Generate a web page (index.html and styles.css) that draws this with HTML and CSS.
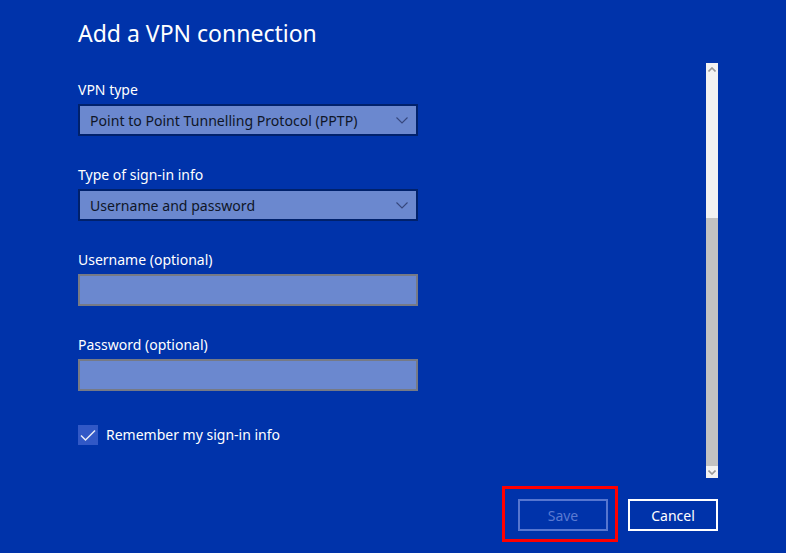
FILE: index.html
```html
<!DOCTYPE html>
<html>
<head>
<meta charset="utf-8">
<link rel="stylesheet" href="styles.css">
</head>
<body>
<div class="dialog">
  <h1 class="title">Add a VPN connection</h1>
  <div class="content">
    <div class="form">
      <div class="field">
        <div class="label">VPN type</div>
        <div class="select"><span>Point to Point Tunnelling Protocol (PPTP)</span>
          <svg class="chev" width="12" height="7" viewBox="0 0 12 7"><path d="M0.5 0.5 L6 6 L11.5 0.5" fill="none" stroke="#36477c" stroke-width="1.1"/></svg>
        </div>
      </div>
      <div class="field">
        <div class="label">Type of sign-in info</div>
        <div class="select"><span>Username and password</span>
          <svg class="chev" width="12" height="7" viewBox="0 0 12 7"><path d="M0.5 0.5 L6 6 L11.5 0.5" fill="none" stroke="#36477c" stroke-width="1.1"/></svg>
        </div>
      </div>
      <div class="field">
        <div class="label">Username (optional)</div>
        <div class="textbox"></div>
      </div>
      <div class="field">
        <div class="label">Password (optional)</div>
        <div class="textbox"></div>
      </div>
      <div class="check-row">
        <span class="checkbox"><svg width="20" height="20" viewBox="0 0 20 20"><path d="M3 10.5 L7.5 15 L17 5.5" fill="none" stroke="#e8ecf8" stroke-width="1.5"/></svg></span>
        <span class="check-label">Remember my sign-in info</span>
      </div>
    </div>
    <div class="scrollbar">
      <div class="sb-btn"><svg width="8" height="5" viewBox="0 0 8 5"><path d="M0.5 4.5 L4 1 L7.5 4.5" fill="none" stroke="#9a9a9a" stroke-width="1.6"/></svg></div>
      <div class="sb-track"></div>
      <div class="sb-thumb"></div>
      <div class="sb-btn"><svg width="8" height="5" viewBox="0 0 8 5"><path d="M0.5 0.5 L4 4 L7.5 0.5" fill="none" stroke="#9a9a9a" stroke-width="1.6"/></svg></div>
    </div>
  </div>
  <div class="actions">
    <div class="highlight"><button class="btn btn-disabled">Save</button></div>
    <button class="btn btn-cancel">Cancel</button>
  </div>
</div>
</body>
</html>
```
FILE: styles.css
```css
html, body {
  margin: 0;
  padding: 0;
  background: #0033aa;
  width: 786px;
  height: 553px;
  overflow: hidden;
  font-family: "Noto Sans", "Open Sans", sans-serif;
}
.dialog {
  padding: 0 68px 0 78px;
}
.title {
  margin: 18px 0 0 0;
  height: 30px;
  line-height: 30px;
  font-size: 23px;
  font-weight: 400;
  color: #ffffff;
}
.content {
  margin-top: 15px;
  display: flex;
  justify-content: space-between;
  align-items: flex-start;
}
.form {
  width: 340px;
  padding-top: 17px;
  display: flex;
  flex-direction: column;
  gap: 29px;
}
.field {
  display: flex;
  flex-direction: column;
  gap: 4px;
}
.label {
  height: 20px;
  line-height: 20px;
  font-size: 14px;
  color: #ffffff;
}
.select {
  box-sizing: border-box;
  height: 32px;
  border: 2px solid #00216c;
  background: #6b88cf;
  display: flex;
  align-items: center;
  justify-content: space-between;
  padding: 0 8px 0 10px;
  font-size: 14.1px;
  color: #0f1628;
}
.textbox {
  box-sizing: border-box;
  height: 32px;
  border: 2px solid #767a86;
  background: #6b88cf;
}
.check-row {
  margin-top: 5px;
  display: flex;
  align-items: center;
  gap: 8px;
}
.checkbox {
  width: 20px;
  height: 20px;
  background: #3158c6;
  display: block;
}
.checkbox svg { display: block; }
.check-label {
  font-size: 14px;
  color: #ffffff;
  line-height: 20px;
}
.scrollbar {
  width: 12px;
  height: 415px;
  display: flex;
  flex-direction: column;
  background: #f2f2f2;
}
.sb-btn {
  height: 12px;
  display: flex;
  align-items: center;
  justify-content: center;
  background: #f2f2f2;
}
.sb-btn svg { display: block; }
.sb-track {
  height: 143px;
  background: #f2f2f2;
}
.sb-thumb {
  flex: 1;
  background: #c2c2c2;
}
.actions {
  margin-top: 8px;
  display: flex;
  justify-content: flex-end;
  align-items: flex-start;
  gap: 10px;
}
.highlight {
  border: 3px solid #ff0000;
  padding: 10px 7px 8px 13px;
}
.btn {
  box-sizing: border-box;
  width: 90px;
  height: 32px;
  background: transparent;
  font-family: "Noto Sans", "Open Sans", sans-serif;
  font-size: 14px;
  padding: 0;
  display: block;
}
.btn-disabled {
  border: 2px solid #5676d0;
  color: #5a7ad2;
}
.btn-cancel {
  margin-top: 13px;
  border: 2px solid #ffffff;
  color: #ffffff;
}
```
